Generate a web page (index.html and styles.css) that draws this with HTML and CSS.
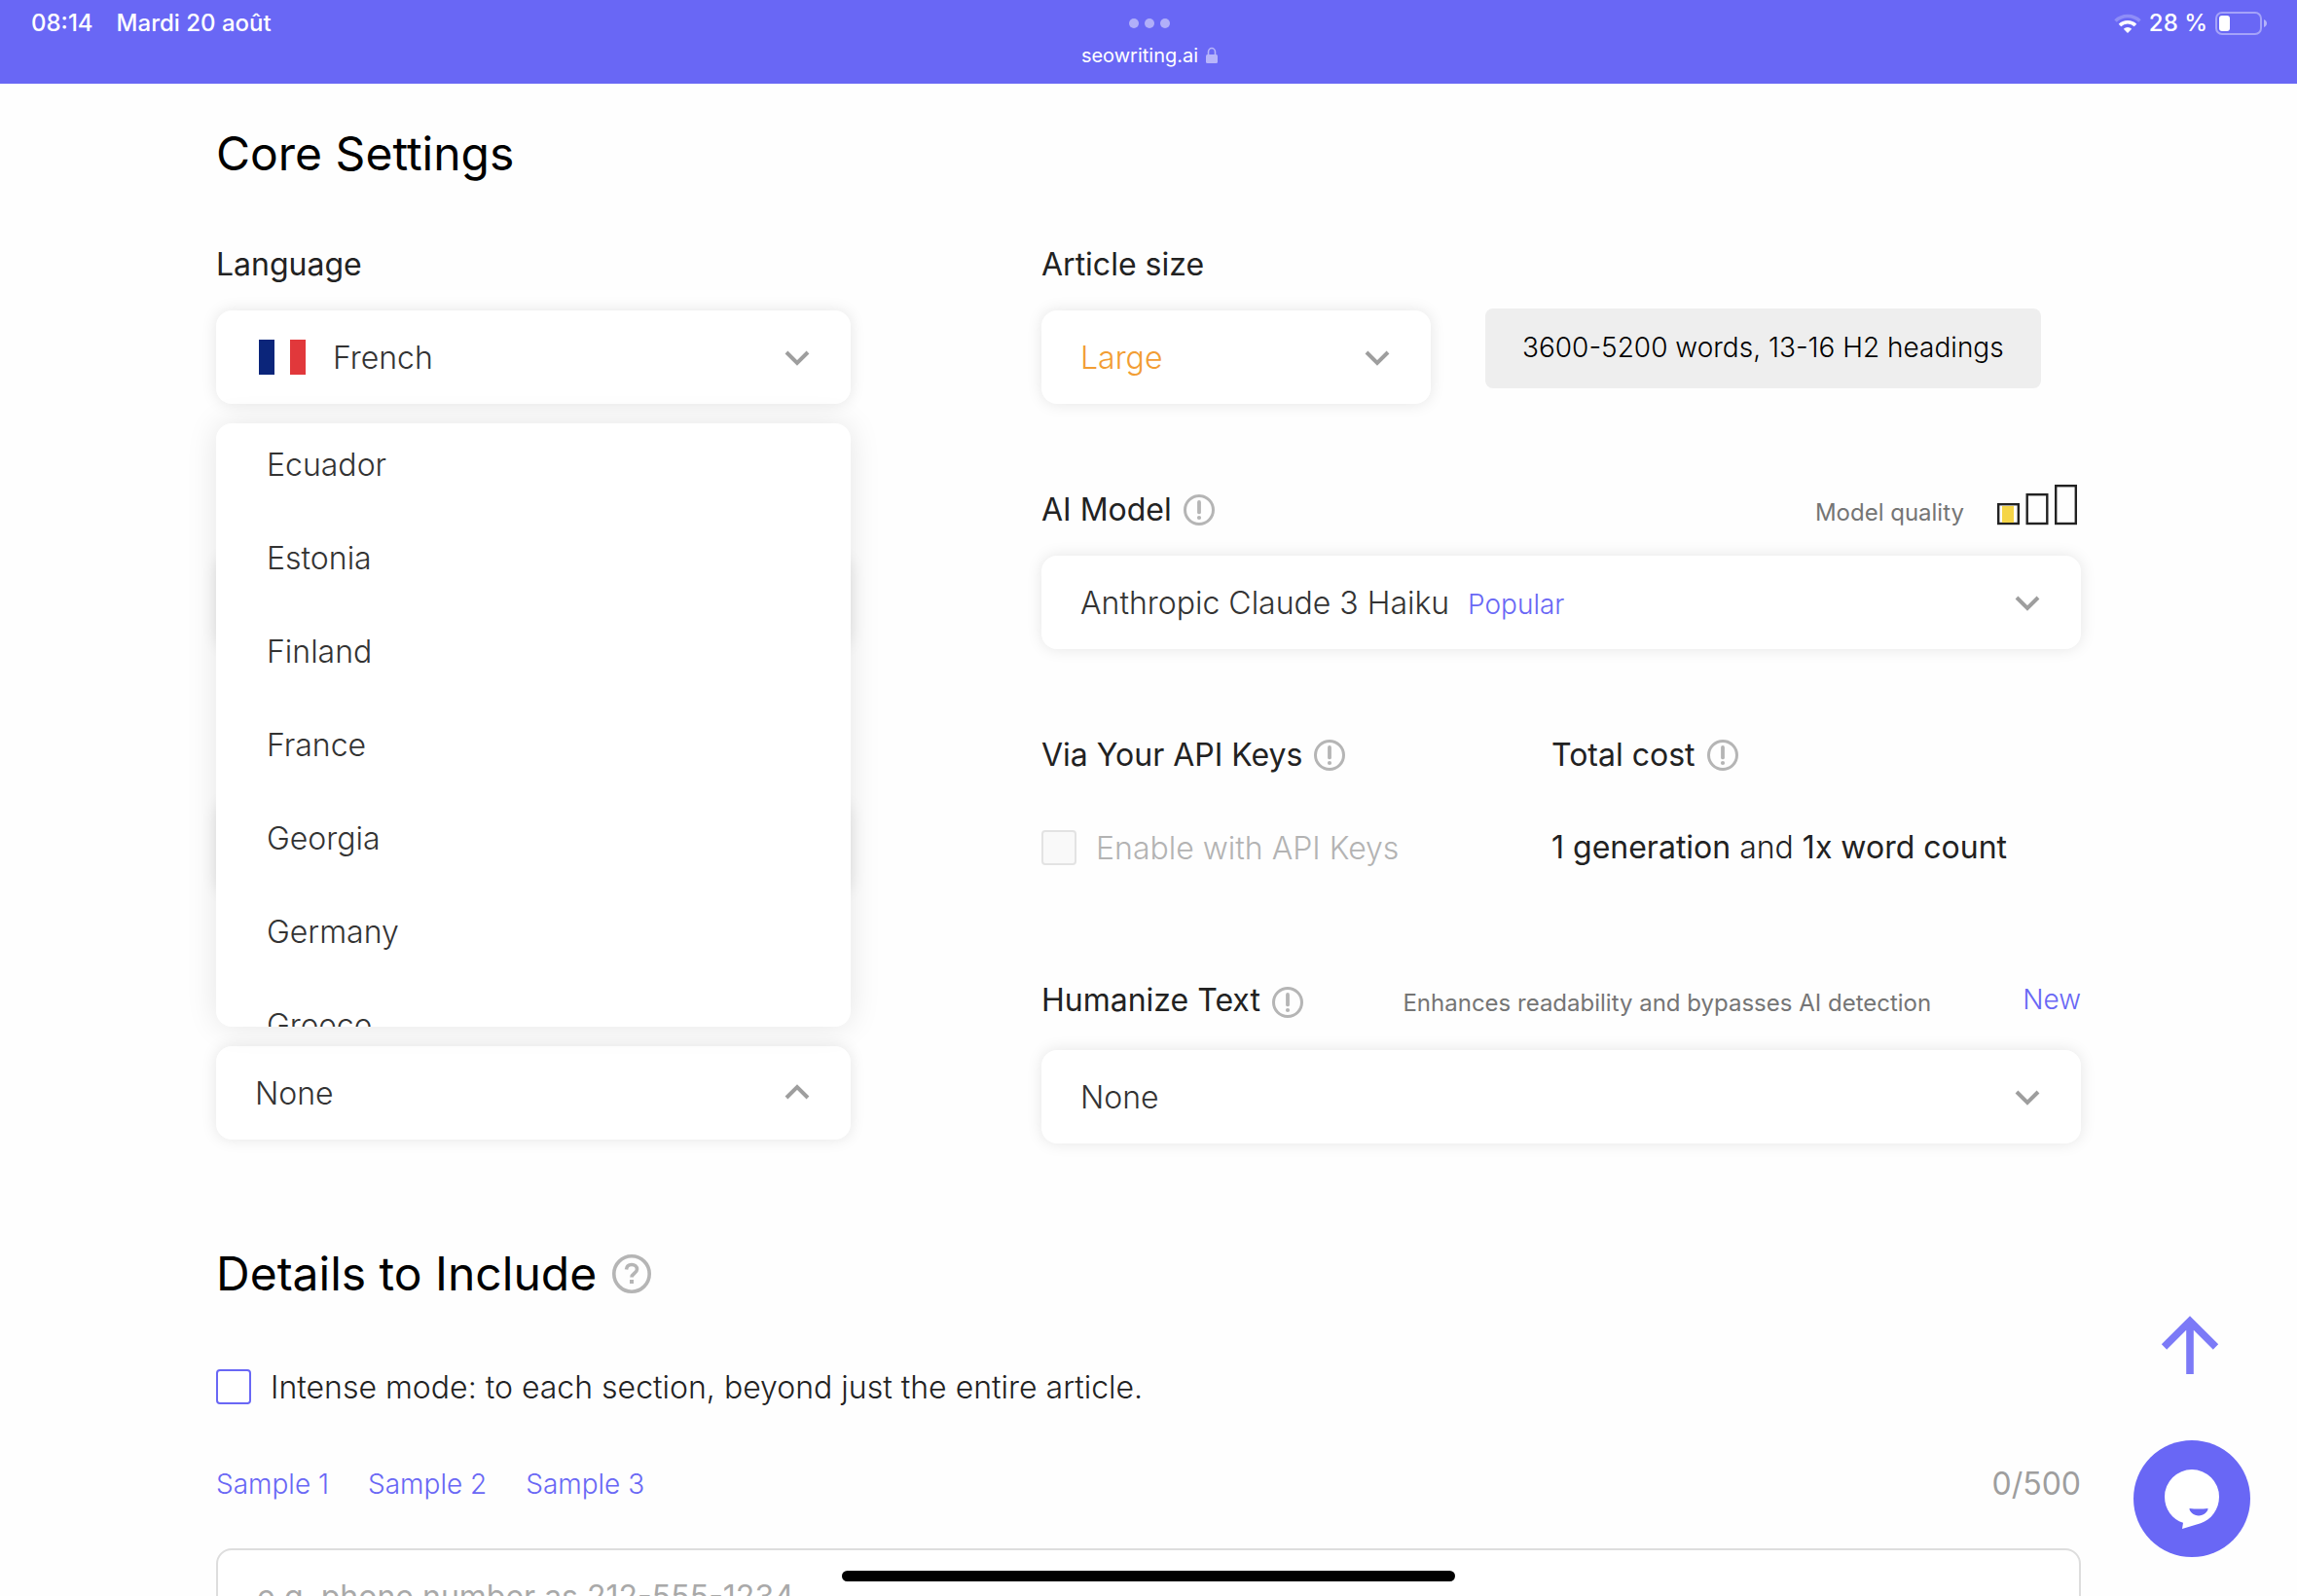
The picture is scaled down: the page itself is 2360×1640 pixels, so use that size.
FILE: index.html
```html
<!DOCTYPE html>
<html lang="en">
<head>
<meta charset="utf-8">
<meta name="viewport" content="width=device-width, initial-scale=1">
<title>Core Settings</title>
<link rel="stylesheet" href="styles.css">
</head>
<body>
<svg class="sprite" aria-hidden="true">
  <symbol id="chevron" viewBox="0 0 26 16"><path d="M2 2l11 11L24 2" fill="none" stroke="currentColor" stroke-width="4"/></symbol>
  <symbol id="info" viewBox="0 0 32 32"><circle cx="16" cy="16" r="14.500" fill="none" stroke="currentColor" stroke-width="3"/><path d="M16 8v10.400" stroke="currentColor" stroke-width="3.800" stroke-linecap="round"/><circle cx="16" cy="24" r="2.100" fill="currentColor"/></symbol>
</svg>

<header class="status">
  <div class="status__side">
    <span>08:14</span>
    <span>Mardi 20 août</span>
  </div>
  <div class="status__center">
    <svg class="status__dots" viewBox="0 0 42 10" aria-hidden="true"><circle cx="5" cy="5" r="5"/><circle cx="21" cy="5" r="5"/><circle cx="37" cy="5" r="5"/></svg>
    <div class="status__url">
      <span>seowriting.ai</span>
      <svg class="status__lock" viewBox="0 0 12 18" aria-hidden="true"><path d="M2.500 9V5.500a3.500 4 0 0 1 7 0V9" fill="none" stroke="currentColor" stroke-width="1.600"/><rect y="8" width="12" height="9" rx="1.500" fill="currentColor"/></svg>
    </div>
  </div>
  <div class="status__side status__side--end">
    <svg class="status__wifi" viewBox="0 0 28 20" aria-hidden="true">
      <path d="M1.500 7.500a18 18 0 0 1 25 0" fill="none" stroke="#fff" stroke-opacity=".25" stroke-width="3.600"/>
      <path d="M6 12a11.500 11.500 0 0 1 16 0" fill="none" stroke="#fff" stroke-width="3.600"/>
      <path d="M14 20l-4.200-4.300a6 6 0 0 1 8.400 0z" fill="#fff"/>
    </svg>
    <span>28 %</span>
    <svg class="status__battery" viewBox="0 0 54 24" aria-hidden="true">
      <rect x="1" y="1" width="46" height="22" rx="6" fill="none" stroke="#fff" stroke-opacity=".4" stroke-width="2"/>
      <rect x="4" y="4" width="11" height="16" rx="3" fill="#fff"/>
      <path d="M50 8c4 1.500 4 6.500 0 8z" fill="#fff" fill-opacity=".5"/>
    </svg>
  </div>
</header>

<main class="page">
  <section>
    <h2 class="title">Core Settings</h2>
    <div class="columns">
      <div class="column">
        <div class="field">
          <div class="field__head"><label class="label" for="language">Language</label></div>
          <div class="box">
            <svg class="flag" viewBox="0 0 48 36" aria-hidden="true"><path d="M0 0h16v36H0z" fill="#0b257a"/><path d="M16 0h16v36H16z" fill="#fff"/><path d="M32 0h16v36H32z" fill="#e1383b"/></svg>
            <select class="box__value" id="language"><option>French</option></select>
            <svg class="chevron" aria-hidden="true"><use href="#chevron"/></svg>
          </div>
        </div>
        <div class="field">
          <div class="field__head"></div>
          <div class="box"></div>
        </div>
        <div class="field">
          <div class="field__head"></div>
          <div class="box"></div>
        </div>
        <div class="field">
          <div class="field__head"></div>
          <div class="picker">
            <button class="box" type="button" aria-haspopup="listbox" aria-expanded="true">
              <span>None</span>
              <svg class="chevron chevron--up" aria-hidden="true"><use href="#chevron"/></svg>
            </button>
            <div class="menu">
              <ul class="menu__list" role="listbox">
                <li class="menu__item" role="option">Ecuador</li>
                <li class="menu__item" role="option">Estonia</li>
                <li class="menu__item" role="option">Finland</li>
                <li class="menu__item" role="option">France</li>
                <li class="menu__item" role="option">Georgia</li>
                <li class="menu__item" role="option">Germany</li>
                <li class="menu__item" role="option">Greece</li>
              </ul>
            </div>
          </div>
        </div>
      </div>

      <div class="column">
        <div class="field">
          <div class="field__head"><label class="label" for="size">Article size</label></div>
          <div class="size">
            <div class="box box--size">
              <select class="box__value box__value--large" id="size"><option>Large</option></select>
              <svg class="chevron" aria-hidden="true"><use href="#chevron"/></svg>
            </div>
            <p class="hint">3600-5200 words, 13-16 H2 headings</p>
          </div>
        </div>

        <div class="field">
          <div class="field__head">
            <label class="label" for="model">AI Model</label>
            <svg class="info" aria-hidden="true"><use href="#info"/></svg>
            <span class="note">Model quality</span>
            <svg class="bars" viewBox="0 0 86 52" aria-hidden="true">
              <g fill="none" stroke="#222" stroke-width="2.400">
                <rect x="1.200" y="20.200" width="20.600" height="19.800"/>
                <rect x="30.700" y="10.200" width="20.600" height="29.800"/>
                <rect x="60.200" y="1.200" width="20.600" height="38.800"/>
              </g>
              <rect x="5" y="22" width="12" height="17" fill="#f5d547"/>
            </svg>
          </div>
          <div class="box">
            <select class="box__value" id="model"><option>Anthropic Claude 3 Haiku</option></select>
            <span class="accent">Popular</span>
            <svg class="chevron" aria-hidden="true"><use href="#chevron"/></svg>
          </div>
        </div>

        <div class="split">
          <div class="field">
            <div class="field__head">
              <span class="label">Via Your API Keys</span>
              <svg class="info" aria-hidden="true"><use href="#info"/></svg>
            </div>
            <label class="check check--field check--disabled">
              <input class="check__input" type="checkbox" disabled>
              <span class="check__text">Enable with API Keys</span>
            </label>
          </div>
          <div class="field">
            <div class="field__head">
              <span class="label">Total cost</span>
              <svg class="info" aria-hidden="true"><use href="#info"/></svg>
            </div>
            <p class="cost"><span><b>1 generation</b> and <b>1x word count</b></span></p>
          </div>
        </div>

        <div class="field">
          <div class="field__head field__head--tall">
            <label class="label" for="humanize">Humanize Text</label>
            <svg class="info" aria-hidden="true"><use href="#info"/></svg>
            <span class="note">Enhances readability and bypasses AI detection</span>
            <span class="accent accent--end">New</span>
          </div>
          <div class="box">
            <select class="box__value" id="humanize"><option>None</option></select>
            <svg class="chevron" aria-hidden="true"><use href="#chevron"/></svg>
          </div>
        </div>
      </div>
    </div>
  </section>

  <section class="details">
    <h2 class="title" id="details-title">Details to Include
      <svg class="help" viewBox="0 0 40 40" aria-hidden="true"><circle cx="20" cy="20" r="18.200" fill="none" stroke="currentColor" stroke-width="3.600"/><path d="M14.500 15.500c.3-3.400 2.500-5 5.500-5 3.300 0 5.500 2 5.500 4.700 0 4.300-5.500 4.300-5.500 8.300" fill="none" stroke="currentColor" stroke-width="3.600"/><path d="M18 26h4v4h-4z" fill="currentColor"/></svg>
    </h2>
    <label class="check">
      <input class="check__input" type="checkbox">
      <span class="check__text">Intense mode: to each section, beyond just the entire article.</span>
    </label>
    <div class="samples">
      <a class="accent" href="#sample-1">Sample 1</a>
      <a class="accent" href="#sample-2">Sample 2</a>
      <a class="accent" href="#sample-3">Sample 3</a>
      <span class="samples__count">0/500</span>
    </div>
    <textarea class="textarea" aria-labelledby="details-title" placeholder="e.g. phone number as 212-555-1234"></textarea>
  </section>
</main>

<div class="floating">
  <button class="floating__top" type="button" aria-label="Back to top">
    <svg viewBox="0 0 64 60" aria-hidden="true"><path d="M30 60V6M3.500 32L30 5.500 56.500 32" fill="none" stroke="currentColor" stroke-width="7.600"/></svg>
  </button>
  <button class="floating__chat" type="button" aria-label="Chat">
    <svg viewBox="0 0 120 120" aria-hidden="true"><path d="M60 30a28 28 0 0 1 28 28c0 13-8 23.500-19 27.300L50 91l1-6.200C40 81.500 32 71 32 58a28 28 0 0 1 28-28z" fill="#fff"/><path d="M57.500 70q9.500 1.200 19 0c.3 3-4.500 7.500-9.500 7.500S57.200 73 57.500 70z" fill="#6967f5"/></svg>
  </button>
</div>
<div class="home-bar"></div>
</body>
</html>
```
FILE: styles.css
```css
* {
  box-sizing: border-box;
}

body {
  margin: 0;
  height: 100vh;
  overflow: hidden;
  background: #fefefe;
  color: #222;
  font: 300 32px/40px Inter, "Liberation Sans", sans-serif;
}

h2, p, ul {
  margin: 0;
  padding: 0;
}

button, select, textarea {
  font: inherit;
  color: inherit;
}

.sprite {
  position: absolute;
  width: 0;
  height: 0;
}

/* Status bar */
.status {
  display: grid;
  grid-template-columns: 1fr auto 1fr;
  height: 86px;
  padding: 12px 30px 0 32px;
  background: #6967f5;
  color: #fff;
  font-size: 24px;
  font-weight: 500;
  line-height: 24px;
}

.status__side {
  display: flex;
  gap: 24px;
  height: 24px;
  align-items: center;
}

.status__side--end {
  justify-content: flex-end;
  gap: 8px;
}

.status__center {
  display: flex;
  flex-direction: column;
  align-items: center;
  gap: 16px;
  padding-top: 7px;
}

.status__dots {
  width: 42px;
  height: 10px;
  fill: #b1aff9;
}

.status__url {
  display: flex;
  gap: 8px;
  align-items: center;
  font-size: 20px;
  font-weight: 400;
}

.status__lock {
  width: 12px;
  height: 18px;
  color: #b7b5fa;
}

.status__wifi {
  width: 28px;
  height: 20px;
}

.status__battery {
  width: 54px;
  height: 24px;
}

/* Page */
.page {
  padding: 42px 222px 0;
}

.title {
  display: flex;
  align-items: center;
  gap: 16px;
  color: #000;
  font-size: 48px;
  font-weight: 400;
  line-height: 60px;
}

.columns {
  display: grid;
  grid-template-columns: 652fr 1068fr;
  gap: 196px;
  margin-top: 63px;
}

.column {
  display: flex;
  flex-direction: column;
  gap: 88px;
}

.split {
  display: grid;
  grid-template-columns: 524fr 544fr;
}

.field__head {
  display: flex;
  align-items: baseline;
  height: 42px;
  margin-bottom: 26px;
  line-height: 42px;
}

.field__head--tall {
  height: 46px;
}

.label {
  font-weight: 400;
}

.info {
  flex: none;
  align-self: center;
  width: 32px;
  height: 32px;
  margin-left: 12px;
  color: #b5b5b5;
}

.note {
  margin-left: auto;
  color: #757575;
  font-size: 24px;
  font-weight: 400;
}

.bars {
  flex: none;
  align-self: center;
  width: 86px;
  height: 52px;
  margin-left: 34px;
}

.box {
  display: flex;
  align-items: center;
  width: 100%;
  height: 96px;
  padding: 2px 42px 0 40px;
  border: 0;
  border-radius: 16px;
  background: #fff;
  box-shadow: 0 0 16px rgba(0, 0, 0, .1);
  color: #333;
}

.box--size {
  width: 400px;
}

.box__value {
  appearance: none;
  height: 40px;
  padding: 0;
  border: 0;
  background: none;
}

.box__value--large {
  color: #f29d33;
}

.chevron {
  width: 26px;
  height: 16px;
  margin-left: auto;
  color: #9e9e9e;
}

.chevron--up {
  margin-bottom: 4px;
  rotate: 180deg;
}

.flag {
  width: 48px;
  height: 36px;
  margin: 0 28px 2px 4px;
}

.accent {
  color: #6967f5;
  font-size: 28px;
  text-decoration: none;
}

.box .accent {
  margin-left: 18px;
  padding-top: 2px;
}

.accent--end {
  align-self: flex-start;
  margin-left: 94px;
  line-height: 40px;
}

.size {
  display: flex;
  align-items: flex-start;
  gap: 56px;
}

.hint {
  margin-top: -2px;
  padding: 20px 38px 22px;
  border-radius: 8px;
  background: #eee;
  color: #000;
  font-size: 28px;
}

.cost {
  display: flex;
  align-items: center;
  height: 96px;
}

.cost b {
  font-weight: 400;
}

/* Open drop-down menu, shown above its button */
.picker {
  position: relative;
}

.menu {
  position: absolute;
  bottom: 100%;
  width: 100%;
  height: 620px;
  margin-bottom: 20px;
  border-radius: 16px;
  overflow: hidden;
  background: #fff;
  box-shadow: 0 0 32px rgba(0, 0, 0, .1);
}

.menu__list {
  margin-top: -5px;
  list-style: none;
}

.menu__item {
  padding: 28px 52px;
  color: #333;
}

/* Check boxes */
.check {
  display: flex;
  align-items: center;
  gap: 20px;
}

.check--field {
  height: 96px;
}

.check__text {
  line-height: 38px;
  padding-top: 2px;
}

.check--disabled {
  color: #b3b3b3;
}

.check__input {
  appearance: none;
  width: 36px;
  height: 36px;
  margin: 0;
  border: 2px solid #6967f5;
  border-radius: 4px;
  background: #fff;
}

.check__input:disabled {
  border-color: #e3e3e3;
  background: #f9f9f9;
}

/* Details */
.details {
  margin-top: 104px;
}

.help {
  width: 40px;
  height: 40px;
  color: #b5b5b5;
}

.details .check {
  margin-top: 66px;
}

.samples {
  display: flex;
  gap: 40px;
  margin-top: 60px;
}

.samples__count {
  margin-left: auto;
  color: #9e9e9e;
  font-weight: 400;
}

.textarea {
  display: block;
  width: 100%;
  height: 300px;
  margin-top: 46px;
  padding: 28px 40px;
  border: 2px solid #ddd;
  border-radius: 16px;
  background: #fff;
  font-weight: 400;
  resize: none;
}

.textarea::placeholder {
  color: #a9a9a9;
}

/* Controls that float over the page */
.floating {
  position: fixed;
  right: 48px;
  bottom: 40px;
  display: flex;
  flex-direction: column;
  align-items: center;
  gap: 68px;
}

.floating button {
  padding: 0;
  border: 0;
  background: none;
}

.floating svg {
  display: block;
}

.floating__top {
  width: 64px;
  height: 60px;
  color: #7c7af7;
}

.floating .floating__chat {
  width: 120px;
  height: 120px;
  border-radius: 50%;
  background: #6967f5;
}

.home-bar {
  position: fixed;
  bottom: 15px;
  left: 50%;
  width: 630px;
  height: 11px;
  margin-left: -315px;
  border-radius: 6px;
  background: #000;
}
```
